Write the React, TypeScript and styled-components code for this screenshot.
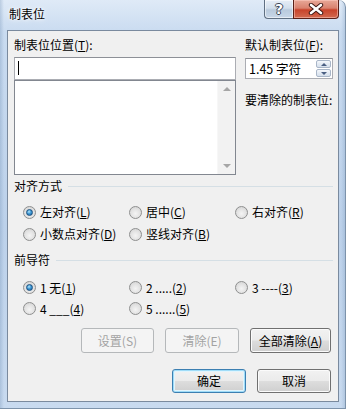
import styled, { createGlobalStyle, css } from "styled-components";

const GlobalStyle = createGlobalStyle`
  html, body {
    margin: 0;
    padding: 0;
    background: #ffffff;
  }
  body {
    font-family: "Noto Sans CJK SC", "Noto Sans", sans-serif;
    font-size: 12px;
    color: #000;
  }
  u {
    text-underline-offset: 1px;
  }
`;

interface Option {
  label: React.ReactNode;
  checked?: boolean;
}

const alignOptions: Option[] = [
  { label: <>左对齐(<u>L</u>)</>, checked: true },
  { label: <>居中(<u>C</u>)</> },
  { label: <>右对齐(<u>R</u>)</> },
  { label: <>小数点对齐(<u>D</u>)</> },
  { label: <>竖线对齐(<u>B</u>)</> },
];

const leaderOptions: Option[] = [
  { label: <>1 无(<u>1</u>)</>, checked: true },
  { label: <>2 .....(<u>2</u>)</> },
  { label: <>3 ----(<u>3</u>)</> },
  { label: <>4 ___(<u>4</u>)</> },
  { label: <>5 ......(<u>5</u>)</> },
];

export default function App() {
  return (
    <>
      <GlobalStyle />
      <Window>
        <TitleBar>
          <Title>制表位</Title>
          <CaptionButtons>
            <HelpButton>?</HelpButton>
            <CloseButton>
              <svg width="16" height="12" viewBox="0 0 16 12">
                <path
                  d="M3 2 L13 10 M13 2 L3 10"
                  stroke="#3b1410"
                  strokeWidth="4.4"
                  strokeLinecap="round"
                />
                <path
                  d="M3 2 L13 10 M13 2 L3 10"
                  stroke="#ffffff"
                  strokeWidth="2.6"
                  strokeLinecap="round"
                />
              </svg>
            </CloseButton>
          </CaptionButtons>
        </TitleBar>

        <Client>
          <TopArea>
            <Column>
              <Label>
                制表位位置(<u>T</u>):
              </Label>
              <TextBox>
                <Caret />
              </TextBox>
              <ListBox>
                <ListScrollBar>
                  <ScrollArrow $dir="up" />
                  <ScrollArrow $dir="down" />
                </ListScrollBar>
              </ListBox>
            </Column>
            <Column>
              <Label>
                默认制表位(<u>F</u>):
              </Label>
              <Spinner>
                <SpinValue>1.45 字符</SpinValue>
                <SpinButtons>
                  <SpinButton>
                    <SpinArrow $dir="up" />
                  </SpinButton>
                  <SpinButton>
                    <SpinArrow $dir="down" />
                  </SpinButton>
                </SpinButtons>
              </Spinner>
              <ClearLabel>要清除的制表位:</ClearLabel>
            </Column>
          </TopArea>

          <GroupHeader $top={3}>
            <span>对齐方式</span>
            <GroupLine />
          </GroupHeader>
          <RadioGrid $top={7} $row={22}>
            {alignOptions.map((o, i) => (
              <RadioItem key={i}>
                <RadioCircle $checked={o.checked} />
                <span>{o.label}</span>
              </RadioItem>
            ))}
          </RadioGrid>

          <GroupHeader $top={7}>
            <span>前导符</span>
            <GroupLine />
          </GroupHeader>
          <RadioGrid $top={9} $row={21}>
            {leaderOptions.map((o, i) => (
              <RadioItem key={i}>
                <RadioCircle $checked={o.checked} />
                <span>{o.label}</span>
              </RadioItem>
            ))}
          </RadioGrid>

          <ButtonRow $top={9}>
            <PushButton $w={73} disabled>
              设置(S)
            </PushButton>
            <PushButton $w={74} disabled>
              清除(E)
            </PushButton>
            <PushButton $w={81}>
              全部清除(<u>A</u>)
            </PushButton>
          </ButtonRow>
          <ButtonRow $top={16}>
            <PushButton $w={74} $h={24} $default>
              确定
            </PushButton>
            <PushButton $w={74} $h={24}>
              取消
            </PushButton>
          </ButtonRow>
        </Client>
      </Window>
    </>
  );
}

const Window = styled.div`
  box-sizing: border-box;
  width: 346px;
  height: 409px;
  display: flex;
  flex-direction: column;
  padding: 0 7px 7px;
  border-radius: 0 7px 0 0;
  background: linear-gradient(
      90deg,
      rgba(120, 150, 185, 0.35) 0px,
      rgba(255, 255, 255, 0) 4px,
      rgba(255, 255, 255, 0) 341px,
      rgba(120, 150, 185, 0.35) 346px
    ),
    linear-gradient(180deg, #dfeaf7 0%, #c9dbf0 8%, #bcd1ea 55%, #c8daef 100%);
  box-shadow: inset -1px 0 0 #7d93ab, inset 0 -1px 0 #7d93ab;
`;

const TitleBar = styled.div`
  height: 30px;
  display: flex;
  align-items: flex-start;
`;

const Title = styled.div`
  margin: 6px 0 0 2px;
  font-size: 12px;
  line-height: 16px;
  color: #000;
  text-shadow: 0 0 6px #ffffff, 0 0 3px #ffffff;
`;

const CaptionButtons = styled.div`
  margin-left: auto;
  display: flex;
  height: 19px;
`;

const captionBase = css`
  box-sizing: border-box;
  height: 19px;
  display: flex;
  align-items: center;
  justify-content: center;
  border: 1px solid #5f6f82;
  border-top: none;
`;

const HelpButton = styled.div`
  ${captionBase};
  width: 29px;
  border-right: none;
  border-radius: 0 0 0 4px;
  background: linear-gradient(180deg, #e6edf6 0%, #d3dfec 45%, #b9cadd 55%, #c8d7e8 100%);
  box-shadow: inset 0 0 0 1px rgba(255, 255, 255, 0.55);
  font-family: "DejaVu Sans", sans-serif;
  font-weight: bold;
  font-size: 14px;
  color: #ffffff;
  text-shadow: 1px 0 0 #3b4656, -1px 0 0 #3b4656, 0 1px 0 #3b4656, 0 -1px 0 #3b4656;
`;

const CloseButton = styled.div`
  ${captionBase};
  width: 46px;
  border-color: #5a2018;
  border-radius: 0 0 4px 0;
  background: linear-gradient(180deg, #e8a898 0%, #d9826f 45%, #c8432b 55%, #d26a50 100%);
  box-shadow: inset 0 0 0 1px rgba(255, 210, 200, 0.5);
`;

const Client = styled.div`
  flex: 1;
  display: flex;
  flex-direction: column;
  padding: 6px 5px 0 6px;
  background: #f0f0f0;
  border: 1px solid #7a8a9e;
`;

const TopArea = styled.div`
  display: grid;
  grid-template-columns: 222px 88px;
  column-gap: 9px;
`;

const Column = styled.div`
  display: flex;
  flex-direction: column;
`;

const Label = styled.div`
  line-height: 16px;
  height: 16px;
  white-space: nowrap;
`;

const ClearLabel = styled(Label)`
  margin-top: 13px;
`;

const TextBox = styled.div`
  box-sizing: border-box;
  margin-top: 4px;
  height: 23px;
  background: #ffffff;
  border: 1px solid #abadb3;
  border-top-color: #8d9097;
  padding: 3px 0 0 3px;
`;

const Caret = styled.div`
  width: 1px;
  height: 14px;
  background: #000;
`;

const ListBox = styled.div`
  box-sizing: border-box;
  height: 95px;
  background: #ffffff;
  border: 1px solid #828790;
  display: flex;
  justify-content: flex-end;
`;

const ListScrollBar = styled.div`
  width: 17px;
  background: #f2f2f2;
  border-left: 1px solid #f7f7f7;
  display: flex;
  flex-direction: column;
  justify-content: space-between;
  align-items: center;
  padding: 6px 0 6px;
`;

const arrowShape = (dir: "up" | "down", w: number, h: number, color: string) => css`
  width: 0;
  height: 0;
  border-left: ${w}px solid transparent;
  border-right: ${w}px solid transparent;
  ${dir === "up"
    ? `border-bottom: ${h}px solid ${color};`
    : `border-top: ${h}px solid ${color};`}
`;

const ScrollArrow = styled.div<{ $dir: "up" | "down" }>`
  ${(p) => arrowShape(p.$dir, 4, 4, "#a6a6a6")};
`;

const Spinner = styled.div`
  box-sizing: border-box;
  margin-top: 5px;
  height: 21px;
  background: #ffffff;
  border: 1px solid #abadb3;
  border-top-color: #8d9097;
  display: flex;
  align-items: center;
  padding: 0 1px 0 3px;
`;

const SpinValue = styled.div`
  flex: 1;
  line-height: 16px;
  font-size: 12.5px;
`;

const SpinButtons = styled.div`
  display: flex;
  flex-direction: column;
  gap: 1px;
`;

const SpinButton = styled.div`
  box-sizing: border-box;
  width: 15px;
  height: 8px;
  border: 1px solid #a9b6c8;
  border-radius: 2px;
  background: linear-gradient(180deg, #f5f8fc 0%, #e3eaf3 50%, #d6e0ec 100%);
  display: flex;
  align-items: center;
  justify-content: center;
`;

const SpinArrow = styled.div<{ $dir: "up" | "down" }>`
  ${(p) => arrowShape(p.$dir, 3, 3, "#4a5f82")};
`;

const GroupHeader = styled.div<{ $top: number }>`
  margin-top: ${(p) => p.$top}px;
  height: 16px;
  line-height: 16px;
  display: flex;
  align-items: center;
  gap: 6px;
`;

const GroupLine = styled.div`
  flex: 1;
  height: 1px;
  background: #d5dfe5;
`;

const RadioGrid = styled.div<{ $top: number; $row: number }>`
  margin: ${(p) => p.$top}px 0 0 9px;
  display: grid;
  grid-template-columns: repeat(3, 106px);
  grid-auto-rows: ${(p) => p.$row}px;
`;

const RadioItem = styled.div`
  display: flex;
  align-items: center;
  gap: 4px;
  line-height: 16px;
  white-space: nowrap;
`;

const RadioCircle = styled.div<{ $checked?: boolean }>`
  box-sizing: border-box;
  width: 13px;
  height: 13px;
  flex: none;
  border-radius: 50%;
  border: 1px solid #8e8f8f;
  background: radial-gradient(circle at 50% 60%, #f4f4f4 0%, #e3e3e3 50%, #cfcfcf 100%);
  display: flex;
  align-items: center;
  justify-content: center;

  &::after {
    content: "";
    display: ${(p) => (p.$checked ? "block" : "none")};
    width: 7px;
    height: 7px;
    box-sizing: border-box;
    border-radius: 50%;
    border: 1px solid #1c5180;
    background: radial-gradient(circle at 40% 35%, #b5e6fb 0%, #3e98d4 45%, #155fa0 100%);
  }
`;

const ButtonRow = styled.div<{ $top: number }>`
  margin: ${(p) => p.$top}px 2px 0 0;
  display: flex;
  justify-content: flex-end;
  gap: 11px;
`;

const PushButton = styled.button<{ $w: number; $h?: number; $default?: boolean }>`
  box-sizing: border-box;
  width: ${(p) => p.$w}px;
  height: ${(p) => p.$h ?? 25}px;
  padding: 0;
  font-family: inherit;
  font-size: 12px;
  line-height: 16px;
  color: #000;
  border: 1px solid #707070;
  border-radius: 3px;
  background: linear-gradient(180deg, #f2f2f2 0%, #ebebeb 48%, #dddddd 52%, #cfcfcf 100%);
  box-shadow: inset 0 0 0 1px #fbfbfb;

  ${(p) =>
    p.$default &&
    css`
      border-color: #3c7fb1;
      box-shadow: inset 0 0 0 1px #9fdcf8, inset 0 0 0 2px #e2f4fc;
    `}

  &:disabled {
    color: #a3a3a3;
    border-color: #b5b8ba;
    background: #f4f4f4;
    box-shadow: none;
  }
`;
